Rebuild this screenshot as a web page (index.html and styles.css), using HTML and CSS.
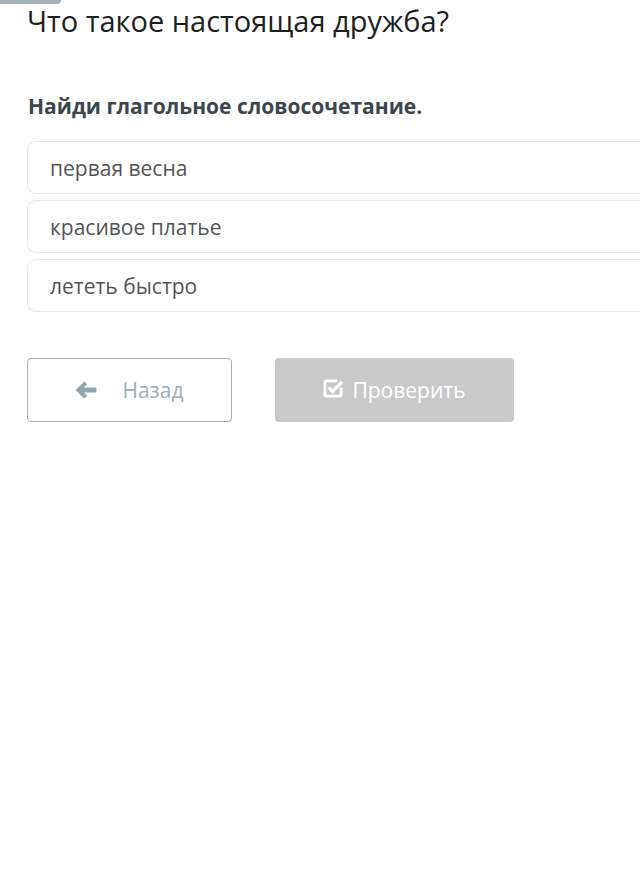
FILE: index.html
```html
<!DOCTYPE html>
<html lang="ru">
<head>
<meta charset="utf-8">
<link rel="stylesheet" href="styles.css">
</head>
<body>
<div class="tab"></div>
<main class="page">
  <h1 class="title">Что такое настоящая дружба?</h1>
  <h2 class="question">Найди глагольное словосочетание.</h2>
  <ul class="options">
    <li class="option">первая весна</li>
    <li class="option">красивое платье</li>
    <li class="option">лететь быстро</li>
  </ul>
  <div class="actions">
    <button class="btn btn-back">
      <svg class="icon-arrow" viewBox="0 0 22 18" width="22" height="18"><path fill="#8fa7b4" d="M0.5 9 L8.5 1.2 Q9.5 0.5 10.5 1.5 L11.5 2.5 Q12 3.5 11 4.5 L8.8 6.6 H20 Q21.5 6.6 21.5 8 V10 Q21.5 11.4 20 11.4 H8.8 L11 13.5 Q12 14.5 11.5 15.5 L10.5 16.5 Q9.5 17.5 8.5 16.8 Z"/></svg>
      <span>Назад</span>
    </button>
    <button class="btn btn-check">
      <svg class="icon-check" viewBox="0 0 22 22" width="21" height="21"><path d="M4 3 H15 M19 10 V17 A2 2 0 0 1 17 19 H4 A2 2 0 0 1 2 17 V5 A2 2 0 0 1 4 3" fill="none" stroke="#fff" stroke-width="3"/><path d="M6 10 L10 14 L20 4" fill="none" stroke="#fff" stroke-width="3.4"/></svg>
      <span>Проверить</span>
    </button>
  </div>
</main>
</body>
</html>
```
FILE: styles.css
```css
html, body {
  margin: 0;
  padding: 0;
  background: #fff;
}
body {
  font-family: "Open Sans", "Noto Sans", sans-serif;
}
.tab {
  width: 61px;
  height: 4px;
  background: #a3b2ba;
  border-bottom-right-radius: 4px;
}
.page {
  padding-left: 27px;
}
.title {
  margin: 0;
  font-size: 29px;
  font-weight: 400;
  line-height: 34px;
  color: #1e1e1e;
}
.question {
  margin: 55px 0 0 1px;
  font-size: 21px;
  font-weight: 700;
  line-height: 26px;
  color: #3b464e;
}
.options {
  list-style: none;
  margin: 22px 0 0;
  padding: 0;
  display: flex;
  flex-direction: column;
  gap: 6px;
}
.option {
  box-sizing: border-box;
  height: 53px;
  border: 1px solid #e2e8ea;
  border-right: none;
  border-radius: 9px 0 0 9px;
  padding-left: 22px;
  display: flex;
  align-items: center;
  font-size: 21px;
  color: #545454;
}
.actions {
  margin-top: 46px;
  display: flex;
  gap: 43px;
}
.btn {
  box-sizing: border-box;
  height: 64px;
  border-radius: 4px;
  font-family: inherit;
  font-size: 21px;
  display: flex;
  align-items: center;
  justify-content: center;
  padding: 0;
}
.btn-back {
  width: 205px;
  background: #fff;
  border: 1px solid #9fb1ba;
  color: #9eaeb7;
  gap: 25px;
}
.btn-check {
  width: 239px;
  background: #c9c9c9;
  border: none;
  color: #fff;
  gap: 8px;
}
.icon-check {
  margin-top: -4px;
}
```
